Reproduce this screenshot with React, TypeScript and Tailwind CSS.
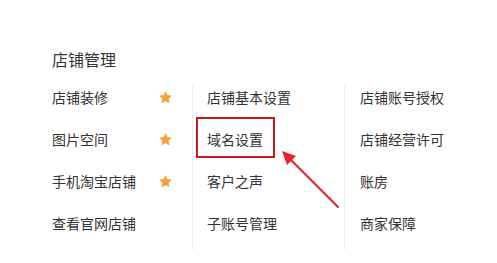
import React from "react";

const font = { fontFamily: '"Microsoft YaHei", "Noto Sans CJK SC", "Noto Sans", sans-serif' };

function Star() {
	return (
		<svg width="13" height="13" viewBox="0 0 24 24" className="shrink-0">
			<polygon
				points="12,1.5 15.1,8.3 22.5,9.1 17,14.1 18.5,21.5 12,17.8 5.5,21.5 7,14.1 1.5,9.1 8.9,8.3"
				fill="#f5a03a"
				stroke="#f5a03a"
				strokeWidth="1.5"
				strokeLinejoin="round"
			/>
		</svg>
	);
}

const col1 = ["店铺装修", "图片空间", "手机淘宝店铺", "查看官网店铺"];
const col2 = ["店铺基本设置", "域名设置", "客户之声", "子账号管理"];
const col3 = ["店铺账号授权", "店铺经营许可", "账房", "商家保障"];

export default function App() {
	return (
		<div className="relative h-[263px] w-[497px] overflow-hidden bg-white text-[#333]" style={font}>
			<div className="pl-[52px] pt-[47px]">
				<h2 className="text-[16px] leading-[24px]">店铺管理</h2>
				<div className="mt-[14px] flex">
					<ul className="flex w-[140px] flex-col gap-[18px] pb-[15px] pr-[20px]">
						{col1.map((t, i) => (
							<li key={t} className="flex h-[24px] items-center justify-between text-[14px]">
								<span>{t}</span>
								{i < 3 && <Star />}
							</li>
						))}
					</ul>
					<ul className="flex w-[152px] flex-col gap-[18px] border-l border-[#eeeeee] pb-[15px] pl-[14px]">
						{col2.map((t) => (
							<li key={t} className="flex h-[24px] items-center text-[14px]">
								{t}
							</li>
						))}
					</ul>
					<ul className="flex flex-1 flex-col gap-[18px] border-l border-[#eeeeee] pb-[15px] pl-[15px]">
						{col3.map((t) => (
							<li key={t} className="flex h-[24px] items-center text-[14px]">
								{t}
							</li>
						))}
					</ul>
				</div>
			</div>

			{/* annotation: highlight box + arrow */}
			<div className="absolute left-[196px] top-[117px] h-[41px] w-[79px] border-2 border-[#c8161e]" />
			<svg className="absolute left-0 top-0" width="497" height="263" viewBox="0 0 497 263">
				<line x1="338" y1="207" x2="290" y2="159" stroke="#d9232b" strokeWidth="2" strokeLinecap="round" />
				<polygon points="282,151 296,156 287,165" fill="#e8212b" />
			</svg>
		</div>
	);
}
